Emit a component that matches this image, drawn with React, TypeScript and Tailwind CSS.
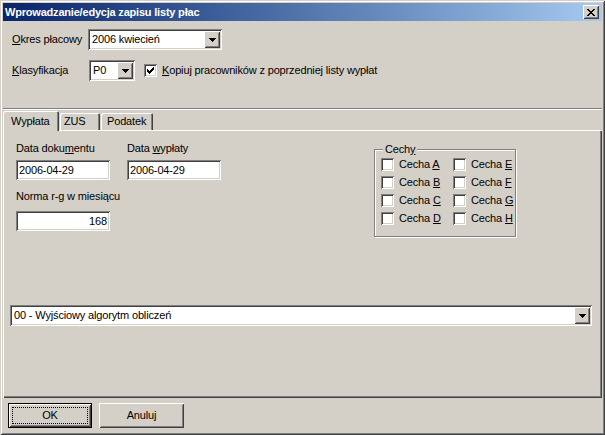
import type { ReactNode } from "react";

const sunken =
  "shadow-[inset_1px_1px_0_#808080,inset_-1px_-1px_0_#ffffff,inset_2px_2px_0_#404040,inset_-2px_-2px_0_#d4d0c8]";
const raised =
  "shadow-[inset_1px_1px_0_#ffffff,inset_-1px_-1px_0_#404040,inset_2px_2px_0_#d4d0c8,inset_-2px_-2px_0_#808080]";

function Arrow() {
  return (
    <svg width="7" height="4" viewBox="0 0 7 4" shapeRendering="crispEdges">
      <rect x="0" y="0" width="7" height="1" fill="#000" />
      <rect x="1" y="1" width="5" height="1" fill="#000" />
      <rect x="2" y="2" width="3" height="1" fill="#000" />
      <rect x="3" y="3" width="1" height="1" fill="#000" />
    </svg>
  );
}

function CloseGlyph() {
  // classic 8x7 close cross
  const rows = [
    [0, 2, 6, 2],
    [1, 2, 5, 2],
    [2, 4],
    [3, 2],
    [2, 4],
    [1, 2, 5, 2],
    [0, 2, 6, 2],
  ];
  return (
    <svg width="8" height="7" viewBox="0 0 8 7" shapeRendering="crispEdges">
      {rows.map((r, y) =>
        r.length === 4 ? (
          <g key={y}>
            <rect x={r[0]} y={y} width={r[1]} height="1" fill="#000" />
            <rect x={r[2]} y={y} width={r[3]} height="1" fill="#000" />
          </g>
        ) : (
          <rect key={y} x={r[0]} y={y} width={r[1]} height="1" fill="#000" />
        )
      )}
    </svg>
  );
}

function Combo({ value, className }: { value: string; className: string }) {
  return (
    <div className={`flex items-center h-[21px] bg-white p-[2px] ${sunken} ${className}`}>
      <span className="flex-1 pl-[2px] whitespace-nowrap overflow-hidden">{value}</span>
      <div className={`w-[16px] h-[17px] shrink-0 bg-[#d4d0c8] flex items-center justify-center ${raised}`}>
        <Arrow />
      </div>
    </div>
  );
}

function Check({ checked, className = "" }: { checked?: boolean; className?: string }) {
  return (
    <div className={`w-[13px] h-[13px] shrink-0 bg-white flex items-center justify-center ${sunken} ${className}`}>
      {checked && (
        <svg width="7" height="7" viewBox="0 0 7 7" shapeRendering="crispEdges">
          <rect x="6" y="0" width="1" height="1" fill="#000" />
          <rect x="5" y="1" width="2" height="1" fill="#000" />
          <rect x="0" y="2" width="1" height="1" fill="#000" />
          <rect x="4" y="2" width="3" height="1" fill="#000" />
          <rect x="0" y="3" width="2" height="1" fill="#000" />
          <rect x="3" y="3" width="3" height="1" fill="#000" />
          <rect x="0" y="4" width="5" height="1" fill="#000" />
          <rect x="1" y="5" width="3" height="1" fill="#000" />
          <rect x="2" y="6" width="1" height="1" fill="#000" />
        </svg>
      )}
    </div>
  );
}

function Field({ value, right, className = "" }: { value: string; right?: boolean; className?: string }) {
  return (
    <div className={`h-[20px] bg-white flex items-center px-[3px] ${right ? "justify-end" : ""} ${sunken} ${className}`}>
      {value}
    </div>
  );
}

function CheckItem({ children }: { children: ReactNode }) {
  return (
    <div className="flex items-center h-[13px]">
      <Check />
      <span className="ml-[5px]">{children}</span>
    </div>
  );
}

export default function App() {
  return (
    <div className="w-[605px] h-[435px] bg-[#d4d0c8] p-[3px] flex flex-col font-['Liberation_Sans',Arial,sans-serif] text-[11px] leading-[13px] tracking-[-0.15px] text-black shadow-[inset_1px_1px_0_#d4d0c8,inset_-1px_-1px_0_#404040,inset_2px_2px_0_#ffffff,inset_-2px_-2px_0_#808080]">
      {/* title bar */}
      <div className="h-[18px] shrink-0 flex items-center pl-[2px] pr-[3px] bg-linear-to-r from-[#0a246a] to-[#a6caf0]">
        <span className="flex-1 text-white font-bold tracking-[-0.2px]">Wprowadzanie/edycja zapisu listy płac</span>
        <div className={`w-[16px] h-[14px] bg-[#d4d0c8] flex items-center justify-center ${raised}`}>
          <CloseGlyph />
        </div>
      </div>

      {/* header panel */}
      <div className="h-[89px] shrink-0 pl-[9px] pt-[8px] shadow-[inset_0_-1px_0_#ffffff,inset_0_-2px_0_#808080]">
        <div className="flex items-center h-[21px]">
          <span className="w-[76px] shrink-0">
            <u>O</u>kres płacowy
          </span>
          <Combo value="2006 kwiecień" className="w-[134px]" />
        </div>
        <div className="flex items-center h-[21px] mt-[10px]">
          <span className="w-[77px] shrink-0">
            <u>K</u>lasyfikacja
          </span>
          <Combo value="P0" className="w-[46px]" />
          <Check checked className="ml-[9px]" />
          <span className="ml-[5px]">
            <u>K</u>opiuj pracowników z poprzedniej listy wypłat
          </span>
        </div>
      </div>

      {/* tabs */}
      <div className="flex items-end h-[20px] shrink-0">
        <div className="relative z-10 h-[20px] mb-[-1px] w-[56px] pl-[8px] pt-[4px] bg-[#d4d0c8] rounded-t-[2px] shadow-[inset_1px_1px_0_#ffffff,inset_-1px_0_0_#404040,inset_-2px_0_0_#808080]">
          Wypłata
        </div>
        <div className="h-[17px] w-[40px] ml-[1px] pl-[4px] pt-[2px] rounded-t-[2px] shadow-[inset_1px_1px_0_#ffffff,inset_-1px_0_0_#404040,inset_-2px_0_0_#808080]">
          ZUS
        </div>
        <div className="h-[17px] w-[52px] ml-[1px] pl-[6px] pt-[2px] rounded-t-[2px] shadow-[inset_1px_1px_0_#ffffff,inset_-1px_0_0_#404040,inset_-2px_0_0_#808080]">
          Podatek
        </div>
      </div>

      {/* tab page */}
      <div className="h-[268px] shrink-0 flex flex-col shadow-[inset_1px_1px_0_#ffffff,inset_-1px_-1px_0_#404040,inset_-2px_-2px_0_#808080]">
        <div className="flex pt-[12px] pl-[13px]">
          <div className="flex flex-col w-[94px]">
            <span>
              Data doku<u>m</u>entu
            </span>
            <Field value="2006-04-29" className="mt-[5px]" />
            <span className="mt-[10px] whitespace-nowrap">Norma r-g w miesiącu</span>
            <Field value="168" right className="mt-[8px]" />
          </div>
          <div className="flex flex-col w-[94px] ml-[17px]">
            <span>
              Data <u>w</u>ypłaty
            </span>
            <Field value="2006-04-29" className="mt-[5px]" />
          </div>

          <div className="relative ml-[153px] mt-[7px] w-[142px] h-[88px] border border-[#808080] shadow-[inset_1px_1px_0_#ffffff,1px_1px_0_#ffffff] pl-[6px] pt-[8px]">
            <span className="absolute -top-[7px] left-[8px] px-[2px] bg-[#d4d0c8]">
              Cech<u>y</u>
            </span>
            <div className="grid grid-cols-[72px_auto] gap-y-[5px]">
              <CheckItem>Cecha <u>A</u></CheckItem>
              <CheckItem>Cecha <u>E</u></CheckItem>
              <CheckItem>Cecha <u>B</u></CheckItem>
              <CheckItem>Cecha <u>F</u></CheckItem>
              <CheckItem>Cecha <u>C</u></CheckItem>
              <CheckItem>Cecha <u>G</u></CheckItem>
              <CheckItem>Cecha <u>D</u></CheckItem>
              <CheckItem>Cecha <u>H</u></CheckItem>
            </div>
          </div>
        </div>

        <Combo value="00 - Wyjściowy algorytm obliczeń" className="w-[582px] ml-[7px] mt-[68px]" />
      </div>

      {/* buttons */}
      <div className="flex pt-[5px] pl-[5px] gap-[7px]">
        <div className="w-[84px] h-[25px] border border-black">
          <div className={`w-full h-full p-[3px] ${raised}`}>
            <div className="w-full h-full border border-dotted border-black flex items-center justify-center">
              OK
            </div>
          </div>
        </div>
        <div className={`w-[85px] h-[25px] flex items-center justify-center ${raised}`}>Anuluj</div>
      </div>
    </div>
  );
}
